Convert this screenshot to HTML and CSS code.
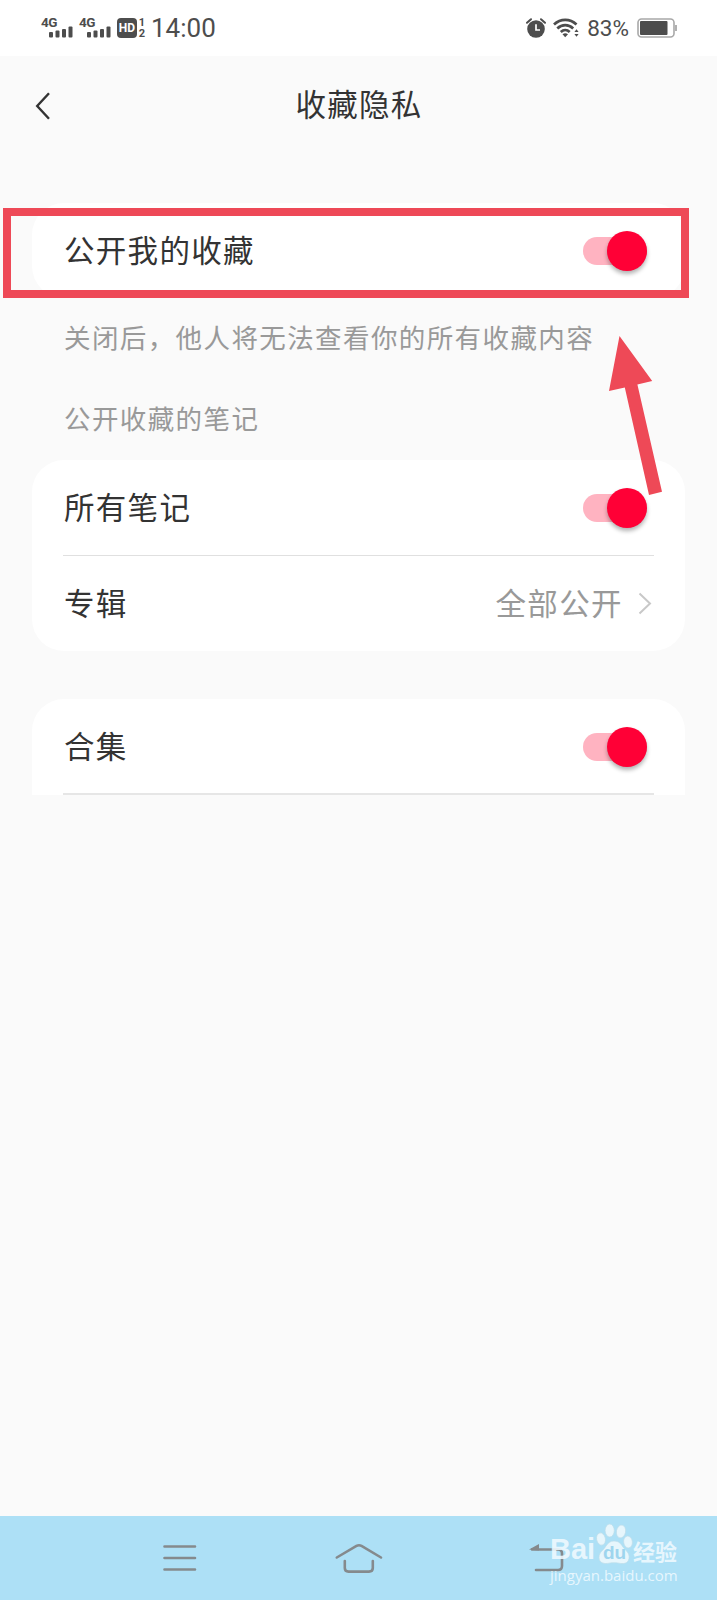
FILE: index.html
```html
<!DOCTYPE html>
<html lang="zh-CN">
<head>
  <meta charset="UTF-8">
  <meta name="viewport" content="width=device-width, initial-scale=1.0">
  <title>收藏隐私</title>
  <link rel="stylesheet" href="styles.css">
</head>
<body>
  <div class="status-bar">
    <div class="status-left">
      <div class="signal">
        <span class="net">4G</span>
        <svg width="24" height="12" viewBox="0 0 24 12" fill="#4d4d4d">
          <rect x="0" y="6" width="4" height="5.5" rx="1"/>
          <rect x="6.5" y="4.5" width="4" height="7" rx="1"/>
          <rect x="13" y="3" width="4" height="8.5" rx="1"/>
          <rect x="19.5" y="0.5" width="4" height="11" rx="1"/>
        </svg>
      </div>
      <div class="signal">
        <span class="net">4G</span>
        <svg width="24" height="12" viewBox="0 0 24 12" fill="#4d4d4d">
          <rect x="0" y="6" width="4" height="5.5" rx="1"/>
          <rect x="6.5" y="4.5" width="4" height="7" rx="1"/>
          <rect x="13" y="3" width="4" height="8.5" rx="1"/>
          <rect x="19.5" y="0.5" width="4" height="11" rx="1"/>
        </svg>
      </div>
      <span class="hd">HD</span>
      <div class="sims"><span>1</span><span>2</span></div>
      <span class="time">14:00</span>
    </div>
    <div class="status-right">
      <svg class="alarm" width="20" height="20" viewBox="0 0 20 20">
        <circle cx="10" cy="11" r="8.8" fill="#4d4d4d"/>
        <path d="M1 4.8L5 1.2M15 1.2L19 4.8" stroke="#4d4d4d" stroke-width="2" stroke-linecap="round"/>
        <path d="M10 6.2V12H14" fill="none" stroke="#fff" stroke-width="1.7"/>
      </svg>
      <svg class="wifi" width="26" height="20" viewBox="0 0 26 20" fill="none" stroke="#4d4d4d" stroke-width="2.7">
        <path d="M1 6.6C7.5 0.4 17 0.4 23.5 6.6"/>
        <path d="M4.3 10.4C9 6 15.5 6 20.2 10.4"/>
        <path d="M7.8 14C10.5 11.5 14 11.5 16.7 14"/>
        <path d="M9.5 16.2Q12.2 14.3 15 16.2L12.2 19.2Z" fill="#4d4d4d" stroke="none"/>
        <path d="M21.4 14L23.5 11.2L25.6 14ZM21.4 16L23.5 18.8L25.6 16Z" fill="#4d4d4d" stroke="none"/>
      </svg>
      <span class="percent">83%</span>
      <svg class="battery" width="40" height="20" viewBox="0 0 40 20">
        <rect x="1" y="1" width="36" height="18" rx="3.5" fill="#fff" stroke="#a8a8a8" stroke-width="1.6"/>
        <rect x="3" y="3" width="27.5" height="14" rx="1" fill="#4d4d4d"/>
        <path d="M39 7V13" stroke="#a8a8a8" stroke-width="1.8"/>
      </svg>
    </div>
  </div>

  <header class="header">
    <svg class="back" width="16" height="30" viewBox="0 0 16 30">
      <path d="M14 2.3L2.2 15L14 27.7" fill="none" stroke="#333" stroke-width="2.4"/>
    </svg>
    <h1>收藏隐私</h1>
  </header>

  <main class="content">
    <section class="card card-public">
      <div class="row">
        <span class="label">公开我的收藏</span>
        <span class="switch"></span>
      </div>
      <div class="highlight"></div>
      <svg class="arrow" width="54" height="160" viewBox="0 0 54 160" fill="#ee4957">
        <path d="M10.5 0L43.2 45L28.4 48.5L53 155.8L40 158.9L15.8 51.5L0 55Z"/>
      </svg>
    </section>

    <p class="tip">关闭后，他人将无法查看你的所有收藏内容</p>
    <p class="group-title">公开收藏的笔记</p>

    <section class="card">
      <div class="row">
        <span class="label">所有笔记</span>
        <span class="switch"></span>
      </div>
      <div class="divider"></div>
      <div class="row">
        <span class="label">专辑</span>
        <span class="value">全部公开</span>
        <svg class="chevron" width="14" height="24" viewBox="0 0 14 24">
          <path d="M1.5 1.5L12 11.5L1.5 21.5" fill="none" stroke="#c8c8c8" stroke-width="2"/>
        </svg>
      </div>
    </section>

    <section class="card card-open">
      <div class="row">
        <span class="label">合集</span>
        <span class="switch"></span>
      </div>
      <div class="divider"></div>
    </section>
  </main>

  <nav class="nav-bar">
    <svg class="nav-menu" width="34" height="28" viewBox="0 0 34 28" stroke="#858a8d" stroke-width="2.6" stroke-linecap="round">
      <path d="M1.5 2.5H32M1.5 14H32M1.5 25.5H32"/>
    </svg>
    <svg class="nav-home" width="48" height="30" viewBox="0 0 48 30" fill="none" stroke="#858a8d" stroke-width="2.6" stroke-linecap="round">
      <path d="M1.8 14.5L21.5 2.9Q24 1.5 26.5 2.9L46 14.5"/>
      <path d="M9.8 18V25Q9.8 28.6 13.5 28.6H34Q37.8 28.6 37.8 25V18"/>
    </svg>
    <svg class="nav-back" width="36" height="30" viewBox="0 0 36 30" fill="none" stroke="#858a8d" stroke-width="2.6" stroke-linecap="round">
      <path d="M3 6.5H29Q33 6.5 33 10.5V23Q33 27 29 27H7"/>
      <path d="M0 6.5L10 1V7.5Z" fill="#858a8d" stroke="none"/>
    </svg>
    <div class="watermark">
      <div class="brand">
        <span class="bai">Bai</span>
        <span class="paw">
          <svg width="38" height="42" viewBox="0 0 38 42" fill="#e7f6fc" stroke="#bcdce9" stroke-width="0.7">
            <ellipse cx="6" cy="16" rx="4.4" ry="6.2" transform="rotate(-12 6 16)"/>
            <ellipse cx="14.7" cy="7.5" rx="4.6" ry="6.5"/>
            <ellipse cx="26" cy="8.5" rx="4.6" ry="6.5" transform="rotate(10 26 8.5)"/>
            <ellipse cx="33" cy="19" rx="4.4" ry="6" transform="rotate(-8 33 19)"/>
            <path d="M19 18C24 18 26 21 28 24C31 28 35 30 34 35.5C33 41 28 41 24 40.2C21 39.6 17 39.6 14 40.2C10 41 4 40.5 4 34.5C4 29 8 28 11 23C13 20 15 18 19 18Z"/>
          </svg>
          <span class="du">du</span>
        </span>
        <span class="jingyan">经验</span>
      </div>
      <div class="site">jingyan.baidu.com</div>
    </div>
  </nav>
</body>
</html>
```
FILE: styles.css
```css
* {
  box-sizing: border-box;
}

body {
  margin: 0;
  height: 1600px;
  display: flex;
  flex-direction: column;
  overflow: hidden;
  background-color: #fafafa;
  color: #333;
  font-family: "Noto Sans", "Noto Sans CJK SC", sans-serif;
}

svg {
  display: block;
  flex: none;
}

/* Status bar */
.status-bar {
  height: 56px;
  padding: 0 40px 0 41px;
  display: flex;
  justify-content: space-between;
  align-items: center;
  background-color: #fff;
  color: #4d4d4d;
  font-family: Roboto, sans-serif;
}

.status-left,
.status-right {
  display: flex;
  align-items: center;
}

.signal {
  width: 32px;
  height: 22px;
  margin-right: 6px;
  display: flex;
  flex-direction: column;
}

.net {
  height: 9px;
  font-size: 13.5px;
  line-height: 10px;
  font-weight: 700;
  letter-spacing: -0.5px;
}

.signal svg {
  margin-left: 8px;
}

.hd {
  width: 20px;
  height: 20px;
  border-radius: 4px;
  background-color: #4d4d4d;
  color: #fff;
  font-size: 12px;
  line-height: 20px;
  font-weight: 700;
  text-align: center;
}

.sims {
  width: 8px;
  margin-left: 1px;
  display: flex;
  flex-direction: column;
  font-size: 11px;
  line-height: 11px;
  font-weight: 700;
  text-align: center;
}

.time {
  margin-left: 5px;
  font-size: 26px;
  line-height: 30px;
}

.alarm {
  margin-right: 7px;
}

.wifi {
  margin-right: 8px;
}

.percent {
  font-size: 22.5px;
  line-height: 28px;
  margin-right: 8px;
}

/* Header */
.header {
  height: 98px;
  position: relative;
  display: flex;
  align-items: center;
  justify-content: center;
}

.back {
  position: absolute;
  left: 35px;
  top: 35px;
}

.header h1 {
  margin: 0 0 2px 1px;
  font-size: 30.5px;
  line-height: 40px;
  font-weight: 400;
  letter-spacing: 1.2px;
}

/* Setting cards */
.content {
  flex: 1;
  padding: 49px 32px 0;
}

.card {
  position: relative;
  border-radius: 32px;
  background-color: #fff;
}

.row {
  height: 95px;
  padding: 0 38px 0 32px;
  display: flex;
  align-items: center;
}

.label {
  flex: 1;
  padding-bottom: 2px;
  font-size: 30.5px;
  line-height: 40px;
  letter-spacing: 1.3px;
}

.value {
  margin-right: 15px;
  padding-bottom: 2px;
  color: #999;
  font-size: 30.5px;
  line-height: 40px;
  letter-spacing: 1.4px;
}

.chevron {
  margin-right: -5px;
}

.divider {
  height: 1px;
  margin: 0 31px;
  background-color: #e0e0e0;
}

.switch {
  width: 64px;
  height: 28px;
  margin-top: 1px;
  position: relative;
  border-radius: 14px;
  background-color: #ffb3c1;
}

.switch::after {
  content: "";
  width: 40px;
  height: 40px;
  position: absolute;
  right: 0;
  top: -6px;
  border-radius: 50%;
  background-color: #ff0036;
  box-shadow: 0 3px 4px rgba(0, 0, 0, 0.3);
}

.tip,
.group-title {
  margin: 0 32px;
  color: #999;
  font-size: 26.5px;
  line-height: 40px;
  letter-spacing: 1.4px;
  white-space: nowrap;
}

.tip {
  margin-top: 20px;
}

.group-title {
  margin-top: 41px;
  margin-bottom: 21px;
}

.card-open {
  margin-top: 48px;
  border-radius: 32px 32px 0 0;
}

.card-open .divider {
  height: 2px;
  background-color: #e6e6e6;
}

.card-open .row {
  height: 94px;
  padding-top: 1px;
}

/* Callout over the first card */
.highlight {
  position: absolute;
  left: -29px;
  right: -4px;
  top: 5px;
  height: 90px;
  border: 8.5px solid #ee4957;
}

.arrow {
  position: absolute;
  left: 577px;
  top: 133px;
  z-index: 1;
}

/* System navigation */
.nav-bar {
  height: 84px;
  padding-left: 163px;
  position: relative;
  display: flex;
  align-items: center;
  background-color: #ade0f6;
}

.nav-home {
  margin-left: 138px;
}

.nav-back {
  margin-left: 146px;
}

.watermark {
  position: absolute;
  left: 550px;
  top: 5px;
  color: rgba(240, 250, 255, 0.88);
  font-family: "Open Sans", "Noto Sans CJK SC", sans-serif;
}

.brand {
  height: 44px;
  display: flex;
  align-items: flex-end;
}

.bai {
  width: 45px;
  font-family: "Liberation Sans", sans-serif;
  font-size: 29px;
  line-height: 32px;
  font-weight: 700;
}

.paw {
  position: relative;
}

.du {
  position: absolute;
  left: 8px;
  top: 20px;
  color: #9ed5ee;
  font-family: "Liberation Sans", sans-serif;
  font-size: 19px;
  line-height: 20px;
  font-weight: 700;
}

.jingyan {
  font-size: 22px;
  line-height: 28px;
  font-weight: 700;
}

.site {
  font-size: 15px;
  line-height: 20px;
}
```
